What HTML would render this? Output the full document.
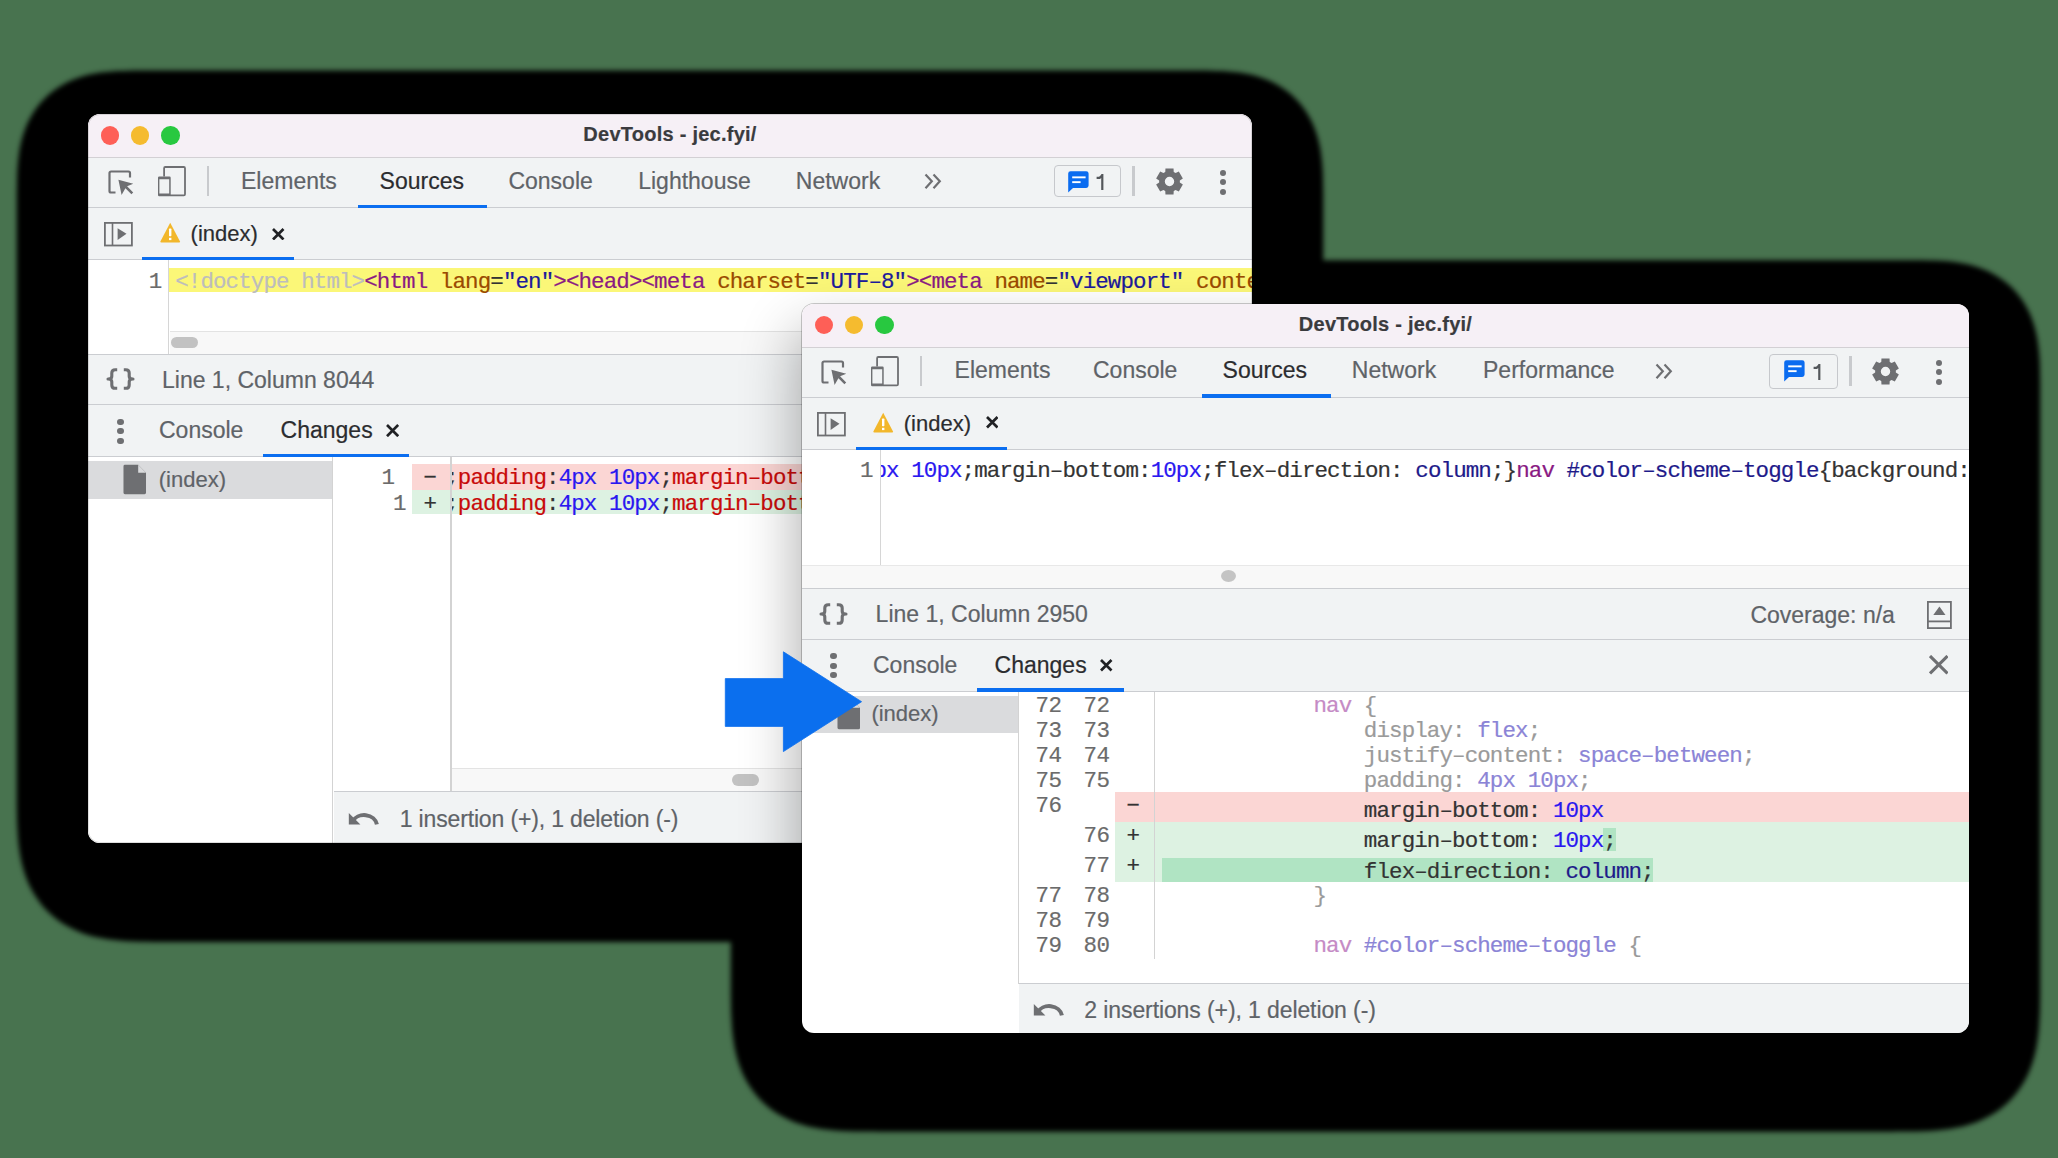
<!DOCTYPE html>
<html><head><meta charset="utf-8"><title>DevTools Changes</title>
<style>
html,body{margin:0;padding:0}
body{width:2058px;height:1158px;background:#48734f;position:relative;overflow:hidden;font-family:'Liberation Sans', sans-serif}
.r{position:absolute}
.t{position:absolute;white-space:pre;-webkit-text-stroke:0.2px currentColor}
.win{position:absolute;overflow:hidden;border-radius:12px}
.sh{position:absolute;background:#000;border-radius:100px 100px 131px 131px / 92px 92px 95px 95px;filter:blur(3px)}
</style></head><body>
<svg class="r" style="left:0;top:0;filter:blur(2.5px)" width="2058" height="1158" viewBox="0 0 2058 1158"><path d="M16.8 251.8 L16.8 247.0 L16.8 242.3 L16.8 237.5 L16.8 232.7 L16.8 227.9 L16.8 223.0 L16.8 218.2 L16.8 213.2 L16.8 208.2 L16.8 203.2 L16.8 198.1 L16.8 192.9 L16.9 187.6 L17.0 182.3 L17.1 176.8 L17.3 171.3 L17.7 165.7 L18.2 160.1 L18.9 154.5 L19.7 148.8 L20.9 143.2 L22.3 137.6 L24.0 132.2 L26.0 126.8 L28.3 121.6 L31.0 116.5 L34.0 111.6 L37.2 107.0 L40.8 102.6 L44.7 98.4 L48.8 94.6 L53.2 91.0 L57.9 87.7 L62.8 84.7 L67.8 82.1 L73.0 79.8 L78.4 77.7 L83.9 76.0 L89.5 74.6 L95.1 73.5 L100.7 72.6 L106.4 71.9 L112.0 71.4 L117.6 71.1 L123.1 70.9 L128.5 70.7 L133.9 70.6 L139.1 70.6 L144.3 70.5 L149.4 70.5 L154.5 70.5 L159.5 70.5 L164.4 70.5 L169.3 70.5 L174.1 70.5 L178.9 70.5 L183.7 70.5 L188.5 70.5 L193.3 70.5 L198.0 70.5 L1142.0 70.5 L1146.7 70.5 L1151.5 70.5 L1156.3 70.5 L1161.1 70.5 L1165.9 70.5 L1170.7 70.5 L1175.6 70.5 L1180.5 70.5 L1185.5 70.5 L1190.6 70.5 L1195.7 70.5 L1200.9 70.6 L1206.1 70.6 L1211.5 70.7 L1216.9 70.9 L1222.4 71.1 L1228.0 71.4 L1233.6 71.9 L1239.3 72.6 L1244.9 73.5 L1250.5 74.6 L1256.1 76.0 L1261.6 77.7 L1267.0 79.8 L1272.2 82.1 L1277.2 84.7 L1282.1 87.7 L1286.8 91.0 L1291.2 94.6 L1295.3 98.4 L1299.2 102.6 L1302.8 107.0 L1306.0 111.6 L1309.0 116.5 L1311.7 121.6 L1314.0 126.8 L1316.0 132.2 L1317.7 137.6 L1319.1 143.2 L1320.3 148.8 L1321.1 154.5 L1321.8 160.1 L1322.3 165.7 L1322.7 171.3 L1322.9 176.8 L1323.0 182.3 L1323.1 187.6 L1323.2 192.9 L1323.2 198.1 L1323.2 203.2 L1323.2 208.2 L1323.2 213.2 L1323.2 218.2 L1323.2 223.0 L1323.2 227.9 L1323.2 232.7 L1323.2 237.5 L1323.2 242.3 L1323.2 247.0 L1323.2 251.7 L1323.2 730.8 L1323.2 736.3 L1323.2 741.8 L1323.2 747.4 L1323.2 753.0 L1323.2 758.6 L1323.2 764.2 L1323.2 769.9 L1323.2 775.7 L1323.2 781.5 L1323.2 787.4 L1323.2 793.3 L1323.2 799.4 L1323.2 805.5 L1323.1 811.8 L1323.0 818.1 L1322.8 824.6 L1322.4 831.1 L1322.0 837.7 L1321.4 844.4 L1320.5 851.1 L1319.4 857.8 L1317.9 864.5 L1316.1 871.0 L1313.9 877.5 L1311.4 883.7 L1308.4 889.8 L1305.0 895.6 L1301.2 901.1 L1297.1 906.4 L1292.5 911.3 L1287.6 915.8 L1282.4 920.0 L1276.8 923.8 L1271.0 927.1 L1265.0 930.1 L1258.7 932.7 L1252.3 934.9 L1245.7 936.7 L1239.1 938.1 L1232.4 939.3 L1225.7 940.1 L1219.0 940.7 L1212.4 941.2 L1205.8 941.5 L1199.4 941.7 L1193.0 941.8 L1186.8 941.9 L1180.6 941.9 L1174.6 942.0 L1168.6 942.0 L1162.7 942.0 L1156.9 942.0 L1151.2 942.0 L1145.5 942.0 L1139.8 942.0 L1134.2 942.0 L1128.6 942.0 L1123.1 942.0 L1117.5 942.0 L1112.0 942.0 L228.0 942.0 L222.5 942.0 L216.9 942.0 L211.4 942.0 L205.8 942.0 L200.2 942.0 L194.5 942.0 L188.8 942.0 L183.1 942.0 L177.3 942.0 L171.4 942.0 L165.4 942.0 L159.4 941.9 L153.2 941.9 L147.0 941.8 L140.6 941.7 L134.2 941.5 L127.6 941.2 L121.0 940.7 L114.3 940.1 L107.6 939.3 L100.9 938.1 L94.3 936.7 L87.7 934.9 L81.3 932.7 L75.0 930.1 L69.0 927.1 L63.2 923.8 L57.6 920.0 L52.4 915.8 L47.5 911.3 L42.9 906.4 L38.8 901.1 L35.0 895.6 L31.6 889.8 L28.6 883.7 L26.1 877.5 L23.9 871.0 L22.1 864.5 L20.6 857.8 L19.5 851.1 L18.6 844.4 L18.0 837.7 L17.6 831.1 L17.2 824.6 L17.0 818.1 L16.9 811.8 L16.8 805.5 L16.8 799.4 L16.8 793.3 L16.8 787.4 L16.8 781.5 L16.8 775.7 L16.8 769.9 L16.8 764.2 L16.8 758.6 L16.8 753.0 L16.8 747.4 L16.8 741.8 L16.8 736.3 L16.8 730.8 Z" fill="#000"/><path d="M730.8 441.4 L730.8 436.7 L730.8 432.0 L730.8 427.2 L730.8 422.4 L730.8 417.6 L730.8 412.7 L730.8 407.9 L730.8 402.9 L730.8 397.9 L730.8 392.9 L730.8 387.8 L730.8 382.6 L730.9 377.3 L731.0 372.0 L731.1 366.5 L731.3 361.0 L731.7 355.4 L732.2 349.8 L732.9 344.2 L733.7 338.5 L734.9 332.9 L736.3 327.3 L738.0 321.9 L740.0 316.5 L742.3 311.3 L745.0 306.2 L748.0 301.3 L751.2 296.7 L754.8 292.3 L758.7 288.1 L762.8 284.3 L767.2 280.7 L771.9 277.4 L776.8 274.4 L781.8 271.8 L787.0 269.5 L792.4 267.4 L797.9 265.7 L803.5 264.3 L809.1 263.2 L814.7 262.3 L820.4 261.6 L826.0 261.1 L831.6 260.8 L837.1 260.6 L842.5 260.4 L847.9 260.3 L853.1 260.3 L858.3 260.2 L863.4 260.2 L868.5 260.2 L873.5 260.2 L878.4 260.2 L883.3 260.2 L888.1 260.2 L892.9 260.2 L897.7 260.2 L902.5 260.2 L907.3 260.2 L912.0 260.2 L1859.0 260.2 L1863.7 260.2 L1868.5 260.2 L1873.3 260.2 L1878.1 260.2 L1882.9 260.2 L1887.7 260.2 L1892.6 260.2 L1897.5 260.2 L1902.5 260.2 L1907.6 260.2 L1912.7 260.2 L1917.9 260.3 L1923.1 260.3 L1928.5 260.4 L1933.9 260.6 L1939.4 260.8 L1945.0 261.1 L1950.6 261.6 L1956.3 262.3 L1961.9 263.2 L1967.5 264.3 L1973.1 265.7 L1978.6 267.4 L1984.0 269.5 L1989.2 271.8 L1994.2 274.4 L1999.1 277.4 L2003.8 280.7 L2008.2 284.3 L2012.3 288.1 L2016.2 292.3 L2019.8 296.7 L2023.0 301.3 L2026.0 306.2 L2028.7 311.3 L2031.0 316.5 L2033.0 321.9 L2034.7 327.3 L2036.1 332.9 L2037.3 338.5 L2038.1 344.2 L2038.8 349.8 L2039.3 355.4 L2039.7 361.0 L2039.9 366.5 L2040.0 372.0 L2040.1 377.3 L2040.2 382.6 L2040.2 387.8 L2040.2 392.9 L2040.2 397.9 L2040.2 402.9 L2040.2 407.9 L2040.2 412.7 L2040.2 417.6 L2040.2 422.4 L2040.2 427.2 L2040.2 432.0 L2040.2 436.7 L2040.2 441.4 L2040.2 920.5 L2040.2 926.0 L2040.2 931.5 L2040.2 937.1 L2040.2 942.7 L2040.2 948.3 L2040.2 953.9 L2040.2 959.6 L2040.2 965.4 L2040.2 971.2 L2040.2 977.1 L2040.2 983.0 L2040.2 989.1 L2040.2 995.2 L2040.1 1001.5 L2040.0 1007.8 L2039.8 1014.3 L2039.4 1020.8 L2039.0 1027.4 L2038.4 1034.1 L2037.5 1040.8 L2036.4 1047.5 L2034.9 1054.2 L2033.1 1060.7 L2030.9 1067.2 L2028.4 1073.4 L2025.4 1079.5 L2022.0 1085.3 L2018.2 1090.8 L2014.1 1096.1 L2009.5 1101.0 L2004.6 1105.5 L1999.4 1109.7 L1993.8 1113.5 L1988.0 1116.8 L1982.0 1119.8 L1975.7 1122.4 L1969.3 1124.6 L1962.7 1126.4 L1956.1 1127.8 L1949.4 1129.0 L1942.7 1129.8 L1936.0 1130.4 L1929.4 1130.9 L1922.8 1131.2 L1916.4 1131.4 L1910.0 1131.5 L1903.8 1131.6 L1897.6 1131.6 L1891.6 1131.7 L1885.6 1131.7 L1879.7 1131.7 L1873.9 1131.7 L1868.2 1131.7 L1862.5 1131.7 L1856.8 1131.7 L1851.2 1131.7 L1845.6 1131.7 L1840.1 1131.7 L1834.5 1131.7 L1829.0 1131.7 L942.0 1131.7 L936.5 1131.7 L930.9 1131.7 L925.4 1131.7 L919.8 1131.7 L914.2 1131.7 L908.5 1131.7 L902.8 1131.7 L897.1 1131.7 L891.3 1131.7 L885.4 1131.7 L879.4 1131.7 L873.4 1131.6 L867.2 1131.6 L861.0 1131.5 L854.6 1131.4 L848.2 1131.2 L841.6 1130.9 L835.0 1130.4 L828.3 1129.8 L821.6 1129.0 L814.9 1127.8 L808.3 1126.4 L801.7 1124.6 L795.3 1122.4 L789.0 1119.8 L783.0 1116.8 L777.2 1113.5 L771.6 1109.7 L766.4 1105.5 L761.5 1101.0 L756.9 1096.1 L752.8 1090.8 L749.0 1085.3 L745.6 1079.5 L742.6 1073.4 L740.1 1067.2 L737.9 1060.7 L736.1 1054.2 L734.6 1047.5 L733.5 1040.8 L732.6 1034.1 L732.0 1027.4 L731.6 1020.8 L731.2 1014.3 L731.0 1007.8 L730.9 1001.5 L730.8 995.2 L730.8 989.1 L730.8 983.0 L730.8 977.1 L730.8 971.2 L730.8 965.4 L730.8 959.6 L730.8 953.9 L730.8 948.3 L730.8 942.7 L730.8 937.1 L730.8 931.5 L730.8 926.0 L730.8 920.5 Z" fill="#000"/></svg>
<div class="win" style="left:88px;top:114px;width:1164px;height:729px;background:#fff"><div class="r" style="left:0.00px;top:0.00px;width:1164.00px;height:43.00px;background:#f6f0f6;"></div><div class="r" style="left:0.00px;top:43.00px;width:1164.00px;height:1.00px;background:#d3d0d4;"></div><div class="r" style="left:12.55px;top:12.25px;width:18.5px;height:18.5px;border-radius:50%;background:#fe5f57"></div><div class="r" style="left:42.55px;top:12.25px;width:18.5px;height:18.5px;border-radius:50%;background:#f5bb2f"></div><div class="r" style="left:73.05px;top:12.25px;width:18.5px;height:18.5px;border-radius:50%;background:#28c840"></div><div class="t" style="left:0;width:1164px;text-align:center;top:10.27px;font-size:20px;line-height:20px;font-weight:700;letter-spacing:0.25px;color:#3a3b3e;font-family:'Liberation Sans', sans-serif">DevTools - jec.fyi/</div><div class="r" style="left:0.00px;top:44.00px;width:1164.00px;height:49.00px;background:#f1f3f4;"></div><div class="r" style="left:0.00px;top:93.00px;width:1164.00px;height:1.00px;background:#cbcdd1;"></div><div class="r" style="left:0.00px;top:94.00px;width:1164.00px;height:51.00px;background:#f1f3f4;"></div><div class="r" style="left:0.00px;top:145.00px;width:1164.00px;height:1.00px;background:#cbcdd1;"></div><div class="t" style="left:153.00px;top:55.53px;font-size:23px;line-height:23px;color:#5f6368;font-family:'Liberation Sans', sans-serif;font-weight:400;">Elements</div><div class="t" style="left:291.60px;top:55.53px;font-size:23px;line-height:23px;color:#2b2c2f;font-family:'Liberation Sans', sans-serif;font-weight:400;">Sources</div><div class="t" style="left:420.40px;top:55.53px;font-size:23px;line-height:23px;color:#5f6368;font-family:'Liberation Sans', sans-serif;font-weight:400;">Console</div><div class="t" style="left:550.20px;top:55.53px;font-size:23px;line-height:23px;color:#5f6368;font-family:'Liberation Sans', sans-serif;font-weight:400;">Lighthouse</div><div class="t" style="left:707.80px;top:55.53px;font-size:23px;line-height:23px;color:#5f6368;font-family:'Liberation Sans', sans-serif;font-weight:400;">Network</div><div class="r" style="left:270.00px;top:90.60px;width:129.40px;height:3.70px;background:#0b6ef0;"></div><svg class="r" style="left:19.5px;top:55.5px" width="26" height="26" viewBox="0 0 26 26">
<path d="M7.5 22.5 H3 a1.5 1.5 0 0 1 -1.5 -1.5 V3 a1.5 1.5 0 0 1 1.5 -1.5 H20.5 a1.5 1.5 0 0 1 1.5 1.5 V7.5" fill="none" stroke="#6e6f72" stroke-width="2.2"/>
<path d="M10.4 9.8 L25.3 13.8 L19.1 16.3 L25.2 22.4 L23.4 24.2 L17.4 18.2 L13.6 25 Z" fill="#6e6f72"/>
</svg><svg class="r" style="left:69px;top:51.5px" width="30" height="31" viewBox="0 0 30 31">
<path d="M7.1 10.5 V2.2 a1.2 1.2 0 0 1 1.2 -1.2 H26.8 a1.2 1.2 0 0 1 1.2 1.2 V28.2 a1.2 1.2 0 0 1 -1.2 1.2 H13" fill="none" stroke="#6e6f72" stroke-width="1.8"/>
<path d="M1.0 11.7 a1.2 1.2 0 0 1 1.2 -1.2 H12.5 a1.2 1.2 0 0 1 1.2 1.2 V29 a1.2 1.2 0 0 1 -1.2 1.2 H2.2 a1.2 1.2 0 0 1 -1.2 -1.2 Z M2.4 13.3 V27.5 H12.2 V13.3 Z" fill="#6e6f72" fill-rule="evenodd"/>
</svg><div class="r" style="left:119.00px;top:52.00px;width:1.60px;height:30.00px;background:#c8cacd;"></div><svg class="r" style="left:835.5px;top:59px" width="18" height="17" viewBox="0 0 18 17">
<path d="M1.5 1.5 L7.8 8.3 L1.5 15.3 M9.5 1.5 L15.8 8.3 L9.5 15.3" fill="none" stroke="#6e6f72" stroke-width="2.2"/>
</svg><div class="r" style="left:965.5px;top:51.1px;width:65px;height:30px;border:1px solid #c6c8cc;border-radius:4px;background:#f1f3f4"></div><svg class="r" style="left:980.0px;top:56.9px" width="21" height="22" viewBox="0 0 21 22">
<path d="M2.6 0.2 H18.2 a2.4 2.4 0 0 1 2.4 2.4 V14.6 a2.4 2.4 0 0 1 -2.4 2.4 H5 L0.2 21.4 V2.6 a2.4 2.4 0 0 1 2.4 -2.4 Z" fill="#0b6cf0"/>
<rect x="4.2" y="5.4" width="13.4" height="1.9" fill="#fff"/>
<rect x="4.2" y="10.2" width="8.4" height="1.9" fill="#fff"/>
</svg><svg class="r" style="left:1007.8px;top:59.9px" width="9" height="16.2" viewBox="0 0 9 16.2">
<path d="M6.3 0 V16.2 M6.8 0.9 L3.6 3.9 H0.6" stroke="#54575b" stroke-width="2.2" fill="none"/>
</svg><div class="r" style="left:1044.00px;top:52.00px;width:2.60px;height:30.00px;background:#c8cacd;"></div><svg class="r" style="left:1067.7px;top:53.8px" width="27" height="27" viewBox="0 0 27 27">
<path d="M9.26 4.00 L9.45 0.41 L17.55 0.41 L17.74 4.00 L19.60 5.08 L22.81 3.45 L26.86 10.46 L23.84 12.42 L23.84 14.58 L26.86 16.54 L22.81 23.55 L19.60 21.92 L17.74 23.00 L17.55 26.59 L9.45 26.59 L9.26 23.00 L7.40 21.92 L4.19 23.55 L0.14 16.54 L3.16 14.58 L3.16 12.42 L0.14 10.46 L4.19 3.45 L7.40 5.08 Z M18.2 13.5 A4.7 4.7 0 1 0 8.8 13.5 A4.7 4.7 0 1 0 18.2 13.5 Z" fill="#6e6f72" fill-rule="evenodd"/>
</svg><div class="r" style="left:1132.30px;top:55.60px;width:6.2px;height:6.2px;border-radius:50%;background:#6e6f72"></div><div class="r" style="left:1132.30px;top:65.10px;width:6.2px;height:6.2px;border-radius:50%;background:#6e6f72"></div><div class="r" style="left:1132.30px;top:74.60px;width:6.2px;height:6.2px;border-radius:50%;background:#6e6f72"></div><svg class="r" style="left:16px;top:107.5px" width="29" height="25" viewBox="0 0 29 25">
<rect x="0.9" y="0.9" width="27" height="22.6" fill="none" stroke="#6e6f72" stroke-width="1.8"/>
<rect x="7.7" y="0.9" width="1.6" height="23" fill="#6e6f72"/>
<path d="M13.6 6.3 L22.5 11.7 L13.6 18 Z" fill="#6e6f72"/>
</svg><svg class="r" style="left:71.8px;top:108.3px" width="21" height="21" viewBox="0 0 21 21">
<path d="M10.2 0.8 L19.9 19.2 a0.9 0.9 0 0 1 -0.8 1.3 H1.3 a0.9 0.9 0 0 1 -0.8 -1.3 Z" fill="#f2b72b"/>
<rect x="9.0" y="6.6" width="2.4" height="7.6" rx="0.6" fill="#fff"/>
<rect x="9.0" y="15.8" width="2.4" height="2.3" fill="#fff"/>
</svg><div class="t" style="left:102.60px;top:108.77px;font-size:22px;line-height:22px;color:#2b2c2f;font-family:'Liberation Sans', sans-serif;font-weight:400;">(index)</div><svg class="r" style="left:184.3px;top:113.8px" width="12.5" height="12.5" viewBox="0 0 12.5 12.5">
<path d="M1 1 L11.5 11.5 M11.5 1 L1 11.5" stroke="#202124" stroke-width="2.7" fill="none"/>
</svg><div class="r" style="left:54.00px;top:142.60px;width:151.60px;height:3.70px;background:#0b6ef0;"></div><div class="r" style="left:0.00px;top:146.00px;width:1164.00px;height:94.00px;background:#ffffff;"></div><div class="r" style="left:81.00px;top:154.20px;width:1083.00px;height:23.70px;background:#fbf778;"></div><div class="r" style="left:80.30px;top:146.00px;width:1.20px;height:94.00px;background:#d6d6d6;"></div><div class="t" style="left:60.80px;top:156.76px;font-size:22.5px;line-height:22.5px;font-family:'Liberation Mono', monospace;letter-spacing:0px;"><span style="color:#6b6b6b">1</span></div><div class="t" style="left:87.20px;top:156.76px;font-size:22.5px;line-height:22.5px;font-family:'Liberation Mono', monospace;letter-spacing:-0.9px;white-space:pre"><span style="color:#bdbdbd">&lt;!doctype html&gt;</span><span style="color:#8a1a83">&lt;html</span><span style="color:#9a4a00"> lang</span><span style="color:#333">=</span><span style="color:#1c1a9c">&quot;en&quot;</span><span style="color:#8a1a83">&gt;&lt;head&gt;&lt;meta</span><span style="color:#9a4a00"> charset</span><span style="color:#333">=</span><span style="color:#1c1a9c">&quot;UTF&#8211;8&quot;</span><span style="color:#8a1a83">&gt;&lt;meta</span><span style="color:#9a4a00"> name</span><span style="color:#333">=</span><span style="color:#1c1a9c">&quot;viewport&quot;</span><span style="color:#9a4a00"> content</span><span style="color:#1c1a9c">=&quot;width=device&#8211;width&quot;</span></div><div class="r" style="left:81.50px;top:216.50px;width:1082.50px;height:23.20px;background:#f8f8f8;"></div><div class="r" style="left:81.50px;top:216.50px;width:1082.50px;height:1.00px;background:#e3e3e3;"></div><div class="r" style="left:80.30px;top:216.50px;width:1.20px;height:23.50px;background:#d6d6d6;"></div><div class="r" style="left:83.00px;top:222.60px;width:27.00px;height:11.80px;background:#c2c2c2;border-radius:6px"></div><div class="r" style="left:0.00px;top:239.70px;width:1164.00px;height:1.00px;background:#cbcdd1;"></div><div class="r" style="left:0.00px;top:240.70px;width:1164.00px;height:49.30px;background:#f1f3f4;"></div><svg class="r" style="left:18.3px;top:253.5px" width="29" height="22" viewBox="0 0 29 22">
<path d="M11.2 1.7 H9.2 Q5.8 1.7 5.8 5.1 V8.2 Q5.8 11 2 11 Q5.8 11 5.8 13.8 V16.9 Q5.8 20.3 9.2 20.3 H11.2" fill="none" stroke="#6e6f72" stroke-width="3.1" stroke-linejoin="round"/>
<path d="M17.8 1.7 H19.8 Q23.2 1.7 23.2 5.1 V8.2 Q23.2 11 27 11 Q23.2 11 23.2 13.8 V16.9 Q23.2 20.3 19.8 20.3 H17.8" fill="none" stroke="#6e6f72" stroke-width="3.1" stroke-linejoin="round"/>
</svg><div class="t" style="left:74.00px;top:254.53px;font-size:23px;line-height:23px;color:#5f6368;font-family:'Liberation Sans', sans-serif;font-weight:400;">Line 1, Column 8044</div><div class="r" style="left:0.00px;top:290.00px;width:1164.00px;height:1.00px;background:#cbcdd1;"></div><div class="r" style="left:0.00px;top:291.00px;width:1164.00px;height:51.00px;background:#f1f3f4;"></div><div class="r" style="left:29.40px;top:304.80px;width:6.2px;height:6.2px;border-radius:50%;background:#6e6f72"></div><div class="r" style="left:29.40px;top:314.30px;width:6.2px;height:6.2px;border-radius:50%;background:#6e6f72"></div><div class="r" style="left:29.40px;top:323.80px;width:6.2px;height:6.2px;border-radius:50%;background:#6e6f72"></div><div class="t" style="left:71.00px;top:304.73px;font-size:23px;line-height:23px;color:#5f6368;font-family:'Liberation Sans', sans-serif;font-weight:400;">Console</div><div class="t" style="left:192.60px;top:304.73px;font-size:23px;line-height:23px;color:#2b2c2f;font-family:'Liberation Sans', sans-serif;font-weight:400;">Changes</div><svg class="r" style="left:298.2px;top:309.8px" width="13.2" height="13.2" viewBox="0 0 13.2 13.2">
<path d="M1 1 L12.2 12.2 M12.2 1 L1 12.2" stroke="#202124" stroke-width="2.7" fill="none"/>
</svg><div class="r" style="left:0.00px;top:342.00px;width:1164.00px;height:1.00px;background:#cbcdd1;"></div><div class="r" style="left:175.30px;top:340.00px;width:145.70px;height:3.70px;background:#0b6ef0;"></div><div class="r" style="left:0.00px;top:343.00px;width:1164.00px;height:386.00px;background:#ffffff;"></div><div class="r" style="left:0.00px;top:347.30px;width:244.50px;height:37.50px;background:#dadbdd;"></div><svg class="r" style="left:35px;top:350px" width="23.5" height="31" viewBox="0 0 24 31">
<path d="M2 0.5 H15.5 L23.5 8.5 V29 a1.5 1.5 0 0 1 -1.5 1.5 H2 a1.5 1.5 0 0 1 -1.5 -1.5 V2 a1.5 1.5 0 0 1 1.5 -1.5 Z" fill="#6e6f72"/>
<path d="M15.5 0.5 V8.5 H23.5 Z" fill="#dadbdd"/>
</svg><div class="t" style="left:70.80px;top:355.37px;font-size:22px;line-height:22px;color:#5f6368;font-family:'Liberation Sans', sans-serif;font-weight:400;">(index)</div><div class="r" style="left:244.00px;top:343.00px;width:1.20px;height:386.00px;background:#d3d3d3;"></div><div class="r" style="left:323.60px;top:350.00px;width:840.40px;height:25.70px;background:#fbd6d4;"></div><div class="r" style="left:323.60px;top:375.70px;width:840.40px;height:24.30px;background:#ddf2e2;"></div><div class="t" style="left:293.50px;top:352.76px;font-size:22.5px;line-height:22.5px;font-family:'Liberation Mono', monospace;letter-spacing:0px;"><span style="color:#6b6b6b">1</span></div><div class="t" style="left:305.00px;top:378.56px;font-size:22.5px;line-height:22.5px;font-family:'Liberation Mono', monospace;letter-spacing:0px;"><span style="color:#6b6b6b">1</span></div><div class="t" style="left:335.50px;top:352.76px;font-size:22.5px;line-height:22.5px;font-family:'Liberation Mono', monospace;letter-spacing:0px;"><span style="color:#333">−</span></div><div class="t" style="left:335.50px;top:378.56px;font-size:22.5px;line-height:22.5px;font-family:'Liberation Mono', monospace;letter-spacing:0px;"><span style="color:#333">+</span></div><div class="r" style="left:362.40px;top:343.00px;width:1.20px;height:334.00px;background:#d3d3d3;"></div><div class="r" style="left:363.6px;top:343px;width:800.4px;height:300px;overflow:hidden"><div class="t" style="left:-6.40px;top:9.76px;font-size:22.5px;line-height:22.5px;font-family:'Liberation Mono', monospace;letter-spacing:-0.9px;white-space:pre"><span style="color:#333">;</span><span style="color:#c80a0a">padding</span><span style="color:#333">:</span><span style="color:#2a17f0">4px 10px</span><span style="color:#333">;</span><span style="color:#c80a0a">margin&#8211;bottom</span><span style="color:#333">:</span><span style="color:#2a17f0">10px</span></div><div class="t" style="left:-6.40px;top:35.56px;font-size:22.5px;line-height:22.5px;font-family:'Liberation Mono', monospace;letter-spacing:-0.9px;white-space:pre"><span style="color:#333">;</span><span style="color:#c80a0a">padding</span><span style="color:#333">:</span><span style="color:#2a17f0">4px 10px</span><span style="color:#333">;</span><span style="color:#c80a0a">margin&#8211;bottom</span><span style="color:#333">:</span><span style="color:#2a17f0">10px</span></div></div><div class="r" style="left:363.60px;top:654.30px;width:800.40px;height:22.70px;background:#f8f8f8;"></div><div class="r" style="left:363.60px;top:654.30px;width:800.40px;height:1.00px;background:#e3e3e3;"></div><div class="r" style="left:362.40px;top:654.30px;width:1.20px;height:23.00px;background:#d3d3d3;"></div><div class="r" style="left:644.00px;top:660.40px;width:27.00px;height:12.00px;background:#c2c2c2;border-radius:6px"></div><div class="r" style="left:245.70px;top:677.00px;width:918.30px;height:1.00px;background:#cbcdd1;"></div><div class="r" style="left:245.70px;top:678.00px;width:918.30px;height:51.00px;background:#f1f3f4;"></div><svg class="r" style="left:260.2px;top:697.6px" width="32" height="16" viewBox="0 0 32 16">
<path d="M4.4 9.6 A12.9 11 0 0 1 28.9 12.4" fill="none" stroke="#6e6f72" stroke-width="4.0"/>
<path d="M0.8 1.0 L0.8 12.6 L12.4 12.6 Z" fill="#6e6f72"/>
</svg><div class="t" style="left:311.70px;top:693.93px;font-size:23px;line-height:23px;color:#5f6368;font-family:'Liberation Sans', sans-serif;font-weight:400;letter-spacing:-0.15px">1 insertion (+), 1 deletion (-)</div><div class="r" style="left:0;top:0;width:1162px;height:727px;border:1px solid rgba(0,0,0,0.13);border-radius:12px"></div></div>
<div class="r" style="left:802px;top:303.7px;width:1167px;height:729px;border-radius:12px;box-shadow:0 0 0 1px rgba(0,0,0,0.2), -5px 26px 56px rgba(0,0,0,0.31)"></div>
<div class="win" style="left:802px;top:303.7px;width:1167px;height:729px;background:#fff"><div class="r" style="left:0.00px;top:0.00px;width:1167.00px;height:43.00px;background:#f6f0f6;"></div><div class="r" style="left:0.00px;top:43.00px;width:1167.00px;height:1.00px;background:#d3d0d4;"></div><div class="r" style="left:12.55px;top:12.25px;width:18.5px;height:18.5px;border-radius:50%;background:#fe5f57"></div><div class="r" style="left:42.55px;top:12.25px;width:18.5px;height:18.5px;border-radius:50%;background:#f5bb2f"></div><div class="r" style="left:73.05px;top:12.25px;width:18.5px;height:18.5px;border-radius:50%;background:#28c840"></div><div class="t" style="left:0;width:1167px;text-align:center;top:10.27px;font-size:20px;line-height:20px;font-weight:700;letter-spacing:0.25px;color:#3a3b3e;font-family:'Liberation Sans', sans-serif">DevTools - jec.fyi/</div><div class="r" style="left:0.00px;top:44.00px;width:1167.00px;height:49.00px;background:#f1f3f4;"></div><div class="r" style="left:0.00px;top:93.00px;width:1167.00px;height:1.00px;background:#cbcdd1;"></div><div class="r" style="left:0.00px;top:94.00px;width:1167.00px;height:51.00px;background:#f1f3f4;"></div><div class="r" style="left:0.00px;top:145.00px;width:1167.00px;height:1.00px;background:#cbcdd1;"></div><div class="t" style="left:152.60px;top:55.53px;font-size:23px;line-height:23px;color:#5f6368;font-family:'Liberation Sans', sans-serif;font-weight:400;">Elements</div><div class="t" style="left:291.00px;top:55.53px;font-size:23px;line-height:23px;color:#5f6368;font-family:'Liberation Sans', sans-serif;font-weight:400;">Console</div><div class="t" style="left:420.60px;top:55.53px;font-size:23px;line-height:23px;color:#2b2c2f;font-family:'Liberation Sans', sans-serif;font-weight:400;">Sources</div><div class="t" style="left:549.80px;top:55.53px;font-size:23px;line-height:23px;color:#5f6368;font-family:'Liberation Sans', sans-serif;font-weight:400;">Network</div><div class="t" style="left:681.00px;top:55.53px;font-size:23px;line-height:23px;color:#5f6368;font-family:'Liberation Sans', sans-serif;font-weight:400;">Performance</div><div class="r" style="left:399.70px;top:90.60px;width:129.30px;height:3.70px;background:#0b6ef0;"></div><svg class="r" style="left:18.8px;top:56.3px" width="26" height="26" viewBox="0 0 26 26">
<path d="M7.5 22.5 H3 a1.5 1.5 0 0 1 -1.5 -1.5 V3 a1.5 1.5 0 0 1 1.5 -1.5 H20.5 a1.5 1.5 0 0 1 1.5 1.5 V7.5" fill="none" stroke="#6e6f72" stroke-width="2.2"/>
<path d="M10.4 9.8 L25.3 13.8 L19.1 16.3 L25.2 22.4 L23.4 24.2 L17.4 18.2 L13.6 25 Z" fill="#6e6f72"/>
</svg><svg class="r" style="left:67.8px;top:52.2px" width="30" height="31" viewBox="0 0 30 31">
<path d="M7.1 10.5 V2.2 a1.2 1.2 0 0 1 1.2 -1.2 H26.8 a1.2 1.2 0 0 1 1.2 1.2 V28.2 a1.2 1.2 0 0 1 -1.2 1.2 H13" fill="none" stroke="#6e6f72" stroke-width="1.8"/>
<path d="M1.0 11.7 a1.2 1.2 0 0 1 1.2 -1.2 H12.5 a1.2 1.2 0 0 1 1.2 1.2 V29 a1.2 1.2 0 0 1 -1.2 1.2 H2.2 a1.2 1.2 0 0 1 -1.2 -1.2 Z M2.4 13.3 V27.5 H12.2 V13.3 Z" fill="#6e6f72" fill-rule="evenodd"/>
</svg><div class="r" style="left:118.00px;top:52.50px;width:1.60px;height:30.00px;background:#c8cacd;"></div><svg class="r" style="left:853.3px;top:59.5px" width="18" height="17" viewBox="0 0 18 17">
<path d="M1.5 1.5 L7.8 8.3 L1.5 15.3 M9.5 1.5 L15.8 8.3 L9.5 15.3" fill="none" stroke="#6e6f72" stroke-width="2.2"/>
</svg><div class="r" style="left:967.2px;top:50.6px;width:66.5px;height:33px;border:1px solid #c6c8cc;border-radius:4px;background:#f1f3f4"></div><svg class="r" style="left:981.7px;top:56.4px" width="21" height="22" viewBox="0 0 21 22">
<path d="M2.6 0.2 H18.2 a2.4 2.4 0 0 1 2.4 2.4 V14.6 a2.4 2.4 0 0 1 -2.4 2.4 H5 L0.2 21.4 V2.6 a2.4 2.4 0 0 1 2.4 -2.4 Z" fill="#0b6cf0"/>
<rect x="4.2" y="5.4" width="13.4" height="1.9" fill="#fff"/>
<rect x="4.2" y="10.2" width="8.4" height="1.9" fill="#fff"/>
</svg><svg class="r" style="left:1010.7px;top:60.5px" width="9" height="16.2" viewBox="0 0 9 16.2">
<path d="M6.3 0 V16.2 M6.8 0.9 L3.6 3.9 H0.6" stroke="#54575b" stroke-width="2.2" fill="none"/>
</svg><div class="r" style="left:1047.00px;top:52.50px;width:2.60px;height:30.00px;background:#c8cacd;"></div><svg class="r" style="left:1069.8px;top:54.3px" width="27" height="27" viewBox="0 0 27 27">
<path d="M9.26 4.00 L9.45 0.41 L17.55 0.41 L17.74 4.00 L19.60 5.08 L22.81 3.45 L26.86 10.46 L23.84 12.42 L23.84 14.58 L26.86 16.54 L22.81 23.55 L19.60 21.92 L17.74 23.00 L17.55 26.59 L9.45 26.59 L9.26 23.00 L7.40 21.92 L4.19 23.55 L0.14 16.54 L3.16 14.58 L3.16 12.42 L0.14 10.46 L4.19 3.45 L7.40 5.08 Z M18.2 13.5 A4.7 4.7 0 1 0 8.8 13.5 A4.7 4.7 0 1 0 18.2 13.5 Z" fill="#6e6f72" fill-rule="evenodd"/>
</svg><div class="r" style="left:1134.30px;top:56.00px;width:6.2px;height:6.2px;border-radius:50%;background:#6e6f72"></div><div class="r" style="left:1134.30px;top:65.60px;width:6.2px;height:6.2px;border-radius:50%;background:#6e6f72"></div><div class="r" style="left:1134.30px;top:75.20px;width:6.2px;height:6.2px;border-radius:50%;background:#6e6f72"></div><svg class="r" style="left:14.8px;top:108px" width="29" height="25" viewBox="0 0 29 25">
<rect x="0.9" y="0.9" width="27" height="22.6" fill="none" stroke="#6e6f72" stroke-width="1.8"/>
<rect x="7.7" y="0.9" width="1.6" height="23" fill="#6e6f72"/>
<path d="M13.6 6.3 L22.5 11.7 L13.6 18 Z" fill="#6e6f72"/>
</svg><svg class="r" style="left:70.8px;top:107.9px" width="21" height="21" viewBox="0 0 21 21">
<path d="M10.2 0.8 L19.9 19.2 a0.9 0.9 0 0 1 -0.8 1.3 H1.3 a0.9 0.9 0 0 1 -0.8 -1.3 Z" fill="#f2b72b"/>
<rect x="9.0" y="6.6" width="2.4" height="7.6" rx="0.6" fill="#fff"/>
<rect x="9.0" y="15.8" width="2.4" height="2.3" fill="#fff"/>
</svg><div class="t" style="left:101.80px;top:109.07px;font-size:22px;line-height:22px;color:#2b2c2f;font-family:'Liberation Sans', sans-serif;font-weight:400;">(index)</div><svg class="r" style="left:183.6px;top:112.8px" width="12.5" height="12.5" viewBox="0 0 12.5 12.5">
<path d="M1 1 L11.5 11.5 M11.5 1 L1 11.5" stroke="#202124" stroke-width="2.7" fill="none"/>
</svg><div class="r" style="left:53.50px;top:143.00px;width:151.50px;height:3.70px;background:#0b6ef0;"></div><div class="r" style="left:0.00px;top:146.00px;width:1167.00px;height:116.00px;background:#ffffff;"></div><div class="r" style="left:77.50px;top:146.00px;width:1.20px;height:116.00px;background:#d6d6d6;"></div><div class="t" style="left:58.00px;top:156.06px;font-size:22.5px;line-height:22.5px;font-family:'Liberation Mono', monospace;letter-spacing:0px;"><span style="color:#6b6b6b">1</span></div><div class="r" style="left:78.7px;top:146px;width:1088.3px;height:100px;overflow:hidden"><div class="t" style="left:-7.30px;top:10.06px;font-size:22.5px;line-height:22.5px;font-family:'Liberation Mono', monospace;letter-spacing:-0.9px;white-space:pre"><span style="color:#2a17f0">px 10px</span><span style="color:#333">;margin&#8211;bottom:</span><span style="color:#2a17f0">10px</span><span style="color:#333">;flex&#8211;direction: </span><span style="color:#1e1a8a">column</span><span style="color:#333">;}</span><span style="color:#8a1a83">nav</span><span style="color:#1e1a8a"> #color&#8211;scheme&#8211;toggle</span><span style="color:#333">{background:</span><span style="color:#333">var(&#8211;&#8211;bg)</span></div></div><div class="r" style="left:0.00px;top:261.50px;width:1167.00px;height:22.80px;background:#f8f8f8;"></div><div class="r" style="left:0.00px;top:261.50px;width:1167.00px;height:1.00px;background:#e8e8e8;"></div><div class="r" style="left:418.50px;top:266.80px;width:15.00px;height:12.00px;background:#c4c4c4;border-radius:50%"></div><div class="r" style="left:0.00px;top:284.30px;width:1167.00px;height:1.00px;background:#cbcdd1;"></div><div class="r" style="left:0.00px;top:285.30px;width:1167.00px;height:50.30px;background:#f1f3f4;"></div><svg class="r" style="left:16.8px;top:299.4px" width="29" height="22" viewBox="0 0 29 22">
<path d="M11.2 1.7 H9.2 Q5.8 1.7 5.8 5.1 V8.2 Q5.8 11 2 11 Q5.8 11 5.8 13.8 V16.9 Q5.8 20.3 9.2 20.3 H11.2" fill="none" stroke="#6e6f72" stroke-width="3.1" stroke-linejoin="round"/>
<path d="M17.8 1.7 H19.8 Q23.2 1.7 23.2 5.1 V8.2 Q23.2 11 27 11 Q23.2 11 23.2 13.8 V16.9 Q23.2 20.3 19.8 20.3 H17.8" fill="none" stroke="#6e6f72" stroke-width="3.1" stroke-linejoin="round"/>
</svg><div class="t" style="left:73.60px;top:299.63px;font-size:23px;line-height:23px;color:#5f6368;font-family:'Liberation Sans', sans-serif;font-weight:400;">Line 1, Column 2950</div><div class="t" style="left:948.40px;top:300.33px;font-size:23px;line-height:23px;color:#5f6368;font-family:'Liberation Sans', sans-serif;font-weight:400;">Coverage: n/a</div><svg class="r" style="left:1125px;top:297px" width="25" height="28" viewBox="0 0 25 28">
<rect x="0.9" y="0.9" width="23" height="26.2" fill="none" stroke="#6e6f72" stroke-width="1.8"/>
<rect x="0.9" y="19.5" width="23" height="1.8" fill="#6e6f72"/>
<path d="M12.4 5.5 L18.5 14 H6.3 Z" fill="#6e6f72"/>
</svg><div class="r" style="left:0.00px;top:335.60px;width:1167.00px;height:1.00px;background:#cbcdd1;"></div><div class="r" style="left:0.00px;top:336.60px;width:1167.00px;height:50.70px;background:#f1f3f4;"></div><div class="r" style="left:28.40px;top:349.60px;width:6.2px;height:6.2px;border-radius:50%;background:#6e6f72"></div><div class="r" style="left:28.40px;top:359.10px;width:6.2px;height:6.2px;border-radius:50%;background:#6e6f72"></div><div class="r" style="left:28.40px;top:368.60px;width:6.2px;height:6.2px;border-radius:50%;background:#6e6f72"></div><div class="t" style="left:71.00px;top:350.13px;font-size:23px;line-height:23px;color:#5f6368;font-family:'Liberation Sans', sans-serif;font-weight:400;">Console</div><div class="t" style="left:192.60px;top:350.13px;font-size:23px;line-height:23px;color:#2b2c2f;font-family:'Liberation Sans', sans-serif;font-weight:400;">Changes</div><svg class="r" style="left:298.3px;top:355.5px" width="12.5" height="12.5" viewBox="0 0 12.5 12.5">
<path d="M1 1 L11.5 11.5 M11.5 1 L1 11.5" stroke="#202124" stroke-width="2.7" fill="none"/>
</svg><svg class="r" style="left:1126.8px;top:351.6px" width="19.5" height="19.5" viewBox="0 0 19.5 19.5">
<path d="M1 1 L18.5 18.5 M18.5 1 L1 18.5" stroke="#6e6f72" stroke-width="3.1" fill="none"/>
</svg><div class="r" style="left:0.00px;top:387.30px;width:1167.00px;height:1.00px;background:#cbcdd1;"></div><div class="r" style="left:174.90px;top:384.60px;width:146.70px;height:3.70px;background:#0b6ef0;"></div><div class="r" style="left:0.00px;top:388.30px;width:1167.00px;height:292.00px;background:#ffffff;"></div><div class="r" style="left:0.00px;top:392.50px;width:215.70px;height:37.30px;background:#dadbdd;"></div><svg class="r" style="left:34.5px;top:395.5px" width="23.5" height="31" viewBox="0 0 24 31">
<path d="M2 0.5 H15.5 L23.5 8.5 V29 a1.5 1.5 0 0 1 -1.5 1.5 H2 a1.5 1.5 0 0 1 -1.5 -1.5 V2 a1.5 1.5 0 0 1 1.5 -1.5 Z" fill="#6e6f72"/>
<path d="M15.5 0.5 V8.5 H23.5 Z" fill="#dadbdd"/>
</svg><div class="t" style="left:69.40px;top:399.37px;font-size:22px;line-height:22px;color:#5f6368;font-family:'Liberation Sans', sans-serif;font-weight:400;">(index)</div><div class="r" style="left:216.00px;top:388.30px;width:1.20px;height:292.00px;background:#d3d3d3;"></div><div class="t" style="left:233.40px;top:390.86px;font-size:22.5px;line-height:22.5px;font-family:'Liberation Mono', monospace;letter-spacing:-0.3px;"><span style="color:#6b6b6b">72</span></div><div class="t" style="left:281.40px;top:390.86px;font-size:22.5px;line-height:22.5px;font-family:'Liberation Mono', monospace;letter-spacing:-0.3px;"><span style="color:#6b6b6b">72</span></div><div class="t" style="left:360.20px;top:390.86px;font-size:22.5px;line-height:22.5px;font-family:'Liberation Mono', monospace;letter-spacing:-0.9px;white-space:pre"><span style="color:#9a9a9a">            </span><span style="color:#c58bc5">nav</span><span style="color:#9a9a9a"> {</span></div><div class="t" style="left:233.40px;top:415.86px;font-size:22.5px;line-height:22.5px;font-family:'Liberation Mono', monospace;letter-spacing:-0.3px;"><span style="color:#6b6b6b">73</span></div><div class="t" style="left:281.40px;top:415.86px;font-size:22.5px;line-height:22.5px;font-family:'Liberation Mono', monospace;letter-spacing:-0.3px;"><span style="color:#6b6b6b">73</span></div><div class="t" style="left:360.20px;top:415.86px;font-size:22.5px;line-height:22.5px;font-family:'Liberation Mono', monospace;letter-spacing:-0.9px;white-space:pre"><span style="color:#9a9a9a">                </span><span style="color:#9a9a9a">display</span><span style="color:#9a9a9a">: </span><span style="color:#8b84d6">flex</span><span style="color:#9a9a9a">;</span></div><div class="t" style="left:233.40px;top:440.86px;font-size:22.5px;line-height:22.5px;font-family:'Liberation Mono', monospace;letter-spacing:-0.3px;"><span style="color:#6b6b6b">74</span></div><div class="t" style="left:281.40px;top:440.86px;font-size:22.5px;line-height:22.5px;font-family:'Liberation Mono', monospace;letter-spacing:-0.3px;"><span style="color:#6b6b6b">74</span></div><div class="t" style="left:360.20px;top:440.86px;font-size:22.5px;line-height:22.5px;font-family:'Liberation Mono', monospace;letter-spacing:-0.9px;white-space:pre"><span style="color:#9a9a9a">                </span><span style="color:#9a9a9a">justify&#8211;content</span><span style="color:#9a9a9a">: </span><span style="color:#8b84d6">space&#8211;between</span><span style="color:#9a9a9a">;</span></div><div class="t" style="left:233.40px;top:465.86px;font-size:22.5px;line-height:22.5px;font-family:'Liberation Mono', monospace;letter-spacing:-0.3px;"><span style="color:#6b6b6b">75</span></div><div class="t" style="left:281.40px;top:465.86px;font-size:22.5px;line-height:22.5px;font-family:'Liberation Mono', monospace;letter-spacing:-0.3px;"><span style="color:#6b6b6b">75</span></div><div class="t" style="left:360.20px;top:465.86px;font-size:22.5px;line-height:22.5px;font-family:'Liberation Mono', monospace;letter-spacing:-0.9px;white-space:pre"><span style="color:#9a9a9a">                </span><span style="color:#9a9a9a">padding</span><span style="color:#9a9a9a">: </span><span style="color:#8b84d6">4px 10px</span><span style="color:#9a9a9a">;</span></div><div class="r" style="left:312.70px;top:488.30px;width:854.30px;height:30.20px;background:#fbd6d4;"></div><div class="t" style="left:233.40px;top:490.86px;font-size:22.5px;line-height:22.5px;font-family:'Liberation Mono', monospace;letter-spacing:-0.3px;"><span style="color:#6b6b6b">76</span></div><div class="t" style="left:324.40px;top:490.86px;font-size:22.5px;line-height:22.5px;font-family:'Liberation Mono', monospace;letter-spacing:0px;"><span style="color:#333">−</span></div><div class="t" style="left:360.20px;top:496.46px;font-size:22.5px;line-height:22.5px;font-family:'Liberation Mono', monospace;letter-spacing:-0.9px;white-space:pre"><span style="color:#333">                </span><span style="color:#333">margin&#8211;bottom</span><span style="color:#333">: </span><span style="color:#2a17f0">10px</span></div><div class="r" style="left:312.70px;top:518.50px;width:854.30px;height:30.20px;background:#ddf2e2;"></div><div class="r" style="left:801.20px;top:524.00px;width:12.60px;height:23.60px;background:#b0e4c3;"></div><div class="t" style="left:281.40px;top:521.06px;font-size:22.5px;line-height:22.5px;font-family:'Liberation Mono', monospace;letter-spacing:-0.3px;"><span style="color:#6b6b6b">76</span></div><div class="t" style="left:324.40px;top:521.06px;font-size:22.5px;line-height:22.5px;font-family:'Liberation Mono', monospace;letter-spacing:0px;"><span style="color:#333">+</span></div><div class="t" style="left:360.20px;top:526.66px;font-size:22.5px;line-height:22.5px;font-family:'Liberation Mono', monospace;letter-spacing:-0.9px;white-space:pre"><span style="color:#333">                </span><span style="color:#333">margin&#8211;bottom</span><span style="color:#333">: </span><span style="color:#2a17f0">10px</span><span style="color:#333">;</span></div><div class="r" style="left:312.70px;top:548.70px;width:854.30px;height:29.80px;background:#ddf2e2;"></div><div class="r" style="left:360.20px;top:554.30px;width:490.50px;height:24.20px;background:#b0e4c3;"></div><div class="t" style="left:281.40px;top:551.26px;font-size:22.5px;line-height:22.5px;font-family:'Liberation Mono', monospace;letter-spacing:-0.3px;"><span style="color:#6b6b6b">77</span></div><div class="t" style="left:324.40px;top:551.26px;font-size:22.5px;line-height:22.5px;font-family:'Liberation Mono', monospace;letter-spacing:0px;"><span style="color:#333">+</span></div><div class="t" style="left:360.20px;top:556.86px;font-size:22.5px;line-height:22.5px;font-family:'Liberation Mono', monospace;letter-spacing:-0.9px;white-space:pre"><span style="color:#333">                </span><span style="color:#333">flex&#8211;direction</span><span style="color:#333">: </span><span style="color:#1e1a8a">column</span><span style="color:#333">;</span></div><div class="t" style="left:233.40px;top:581.06px;font-size:22.5px;line-height:22.5px;font-family:'Liberation Mono', monospace;letter-spacing:-0.3px;"><span style="color:#6b6b6b">77</span></div><div class="t" style="left:281.40px;top:581.06px;font-size:22.5px;line-height:22.5px;font-family:'Liberation Mono', monospace;letter-spacing:-0.3px;"><span style="color:#6b6b6b">78</span></div><div class="t" style="left:360.20px;top:581.06px;font-size:22.5px;line-height:22.5px;font-family:'Liberation Mono', monospace;letter-spacing:-0.9px;white-space:pre"><span style="color:#9a9a9a">            </span><span style="color:#9a9a9a">}</span></div><div class="t" style="left:233.40px;top:606.06px;font-size:22.5px;line-height:22.5px;font-family:'Liberation Mono', monospace;letter-spacing:-0.3px;"><span style="color:#6b6b6b">78</span></div><div class="t" style="left:281.40px;top:606.06px;font-size:22.5px;line-height:22.5px;font-family:'Liberation Mono', monospace;letter-spacing:-0.3px;"><span style="color:#6b6b6b">79</span></div><div class="t" style="left:360.20px;top:606.06px;font-size:22.5px;line-height:22.5px;font-family:'Liberation Mono', monospace;letter-spacing:-0.9px;white-space:pre"><span style="color:#9a9a9a"></span></div><div class="t" style="left:233.40px;top:631.06px;font-size:22.5px;line-height:22.5px;font-family:'Liberation Mono', monospace;letter-spacing:-0.3px;"><span style="color:#6b6b6b">79</span></div><div class="t" style="left:281.40px;top:631.06px;font-size:22.5px;line-height:22.5px;font-family:'Liberation Mono', monospace;letter-spacing:-0.3px;"><span style="color:#6b6b6b">80</span></div><div class="t" style="left:360.20px;top:631.06px;font-size:22.5px;line-height:22.5px;font-family:'Liberation Mono', monospace;letter-spacing:-0.9px;white-space:pre"><span style="color:#9a9a9a">            </span><span style="color:#c58bc5">nav</span><span style="color:#9a9a9a"> </span><span style="color:#8b84d6">#color&#8211;scheme&#8211;toggle</span><span style="color:#9a9a9a"> {</span></div><div class="r" style="left:352.00px;top:388.30px;width:1.20px;height:266.60px;background:#d3d3d3;"></div><div class="r" style="left:217.20px;top:679.80px;width:949.80px;height:1.00px;background:#cbcdd1;"></div><div class="r" style="left:217.20px;top:680.80px;width:949.80px;height:49.00px;background:#f1f3f4;"></div><svg class="r" style="left:230.8px;top:698.9px" width="32" height="16" viewBox="0 0 32 16">
<path d="M4.4 9.6 A12.9 11 0 0 1 28.9 12.4" fill="none" stroke="#6e6f72" stroke-width="4.0"/>
<path d="M0.8 1.0 L0.8 12.6 L12.4 12.6 Z" fill="#6e6f72"/>
</svg><div class="t" style="left:282.30px;top:695.03px;font-size:23px;line-height:23px;color:#5f6368;font-family:'Liberation Sans', sans-serif;font-weight:400;letter-spacing:-0.1px">2 insertions (+), 1 deletion (-)</div>
</div>
<svg class="r" style="left:720px;top:645px" width="150" height="115" viewBox="720 645 150 115">
<path d="M725.3 678.6 H783.4 V651.8 L861.6 701.7 L783.4 751.6 V726.4 H725.3 Z" fill="#0b6fee" stroke="#0b6fee" stroke-width="0.8" stroke-linejoin="round"/>
</svg>
</body></html>
